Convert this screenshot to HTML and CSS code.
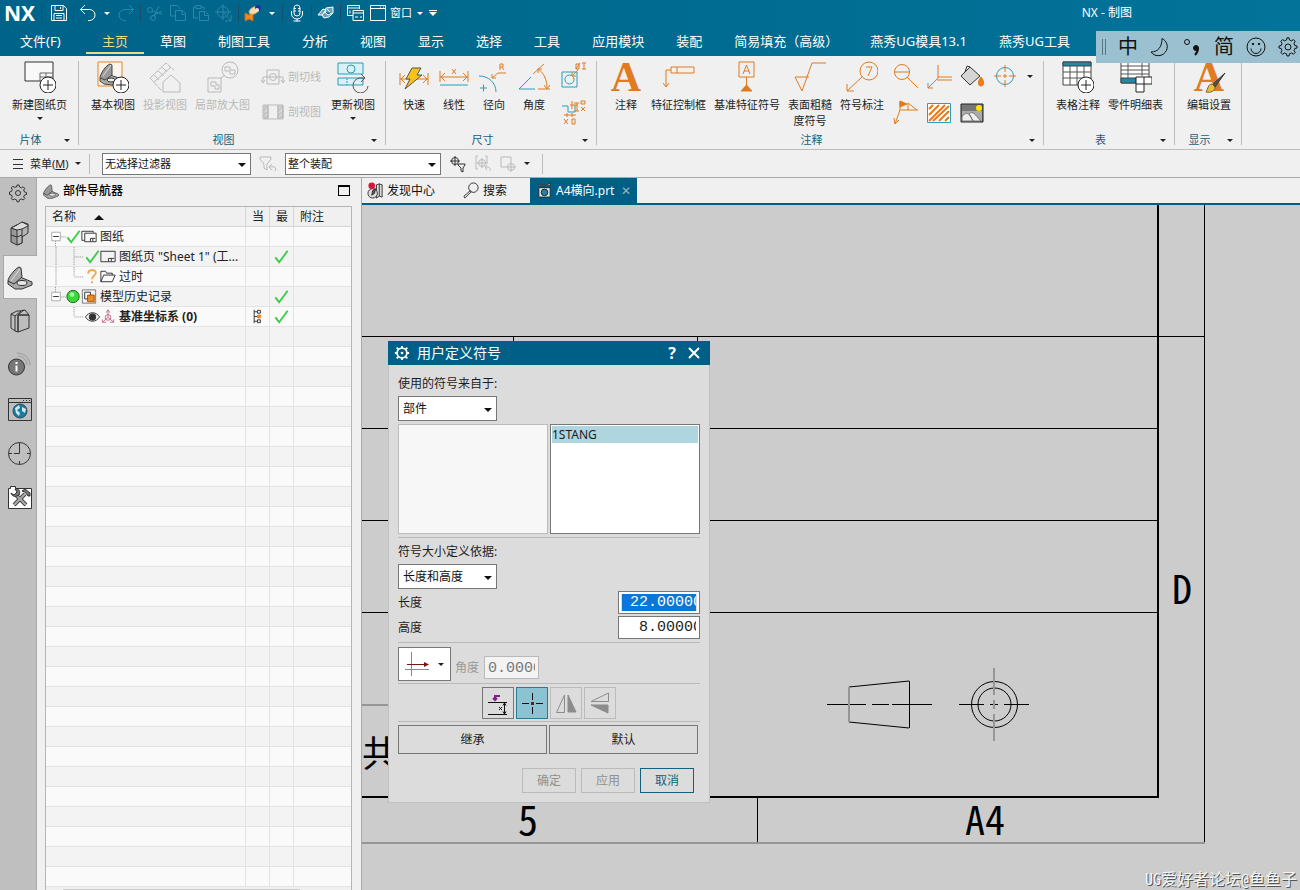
FILE: index.html
```html
<!DOCTYPE html>
<html lang="zh-CN">
<head>
<meta charset="utf-8">
<title>NX - 制图</title>
<link rel="stylesheet" href="styles.css">
</head>
<body>
<header class="titlebar">
  <span class="logo">NX</span><i class="tsep logo-sep"></i>
  <button class="tbtn" aria-label="保存"><svg viewBox="0 0 18 18"><path d="M1.500 1.500h12l3 3v12h-15zM5 1.500v5h8v-5M10.500 3v2M4 16.500v-7h10v7M6 11.500h6M6 14h6"/></svg></button>
  <i class="tsep"></i>
  <button class="tbtn" aria-label="撤销"><svg viewBox="0 0 18 18"><path d="M6 1L1.500 5.500 6 10M2 5.500h8.500a5.500 5.500 0 0 1 0 11H9"/></svg></button>
  <button class="tcaret" aria-label="撤销列表"></button>
  <button class="tbtn dim" disabled aria-label="重做"><svg viewBox="0 0 18 18"><path d="M12 1l4.500 4.500L12 10M16 5.500H7.500a5.500 5.500 0 0 0 0 11H9"/></svg></button>
  <i class="tsep"></i>
  <button class="tbtn dim" disabled aria-label="剪切"><svg viewBox="0 0 18 18"><circle cx="4" cy="6" r="2.500"/><circle cx="7" cy="14" r="2.500"/><path d="M6 7l10 3M8 12l5-10M6 12l10-5"/></svg></button>
  <button class="tbtn dim" disabled aria-label="复制"><svg viewBox="0 0 18 18"><path d="M6 12H1.500v-10.500h7l2 2V5M6.500 6.500h7l3 3v7h-10zM13 6.500v4h3"/></svg></button>
  <button class="tbtn dim" disabled aria-label="粘贴"><svg viewBox="0 0 18 18"><path d="M6 14H1.500V3H4M4 1.500h5v3H4zM9 3h3v3M7.500 7.500h6l3 3v6h-9zM12.500 8v3.500h4"/></svg></button>
  <button class="tbtn dim" disabled aria-label="删除"><svg viewBox="0 0 18 18"><circle cx="8" cy="8" r="5.500"/><path d="M8 0v16M0 8h16M9 9l7 8M16 11v6h-6"/></svg></button>
  <i class="tsep"></i>
  <button class="tbtn" aria-label="特征"><svg viewBox="0 0 18 18"><path d="M1 9l4 2 4-2v8l-4-2-4 2z" fill="#f28b1f" stroke="#c96a10"/><path d="M5 8c1-4 5-6 9-5l1 2c-1 4-5 6-9 5z" fill="#f3d9b0" stroke="#d7a764"/><circle cx="14" cy="4" r="3" fill="#2030a0" stroke="none"/><circle cx="13" cy="6" r="2" fill="#f4e4cc" stroke="none"/></svg></button>
  <button class="tcaret" aria-label="特征列表"></button>
  <i class="tsep"></i>
  <button class="tbtn" aria-label="语音"><svg viewBox="0 0 18 18"><rect x="6" y="1" width="6" height="11" rx="3"/><path d="M3.500 7v3a5.500 5 0 0 0 11 0V7M9 15v2.500M5.500 17h7M6 4.500h2M10 4.500h2M6 7h2M10 7h2"/></svg></button>
  <i class="tsep"></i>
  <button class="tbtn" aria-label="触控"><svg viewBox="0 0 18 18"><path d="M1 11l5-6 3 1-4 5zM9 4l7-1v6l-4 4-5 1-2-3 3-3zM8 8l3 3 4-2M10 5l3 3" fill="#cfe6ef" fill-opacity=".5"/></svg></button>
  <i class="tsep"></i>
  <button class="tbtn" aria-label="切换窗口"><svg viewBox="0 0 18 18"><path d="M7 11.500H1.500v-10h12V5M1.500 4h12M7 6.500h10.500v10H7zM7 9h10M9 13h3M14 13h2M4 6.500v3"/></svg></button>
  <button class="tbtn wide" aria-label="窗口"><svg viewBox="0 0 18 18"><path d="M1.500 1.500h15v15h-15zM1.500 4.500h15M11 3h1M14 3h1"/></svg><span>窗口</span></button>
  <button class="tcaret last" aria-label="窗口列表"></button>
  <button class="tcaret over" aria-label="自定义"></button>
  <span class="apptitle">NX - 制图</span>
</header>

<nav class="tabs">
  <button class="file">文件(F)</button><button class="on">主页</button><button>草图</button><button>制图工具</button><button>分析</button><button>视图</button><button>显示</button><button>选择</button><button>工具</button><button>应用模块</button><button>装配</button><button>简易填充（高级）</button><button>燕秀UG模具13.1</button><button>燕秀UG工具</button>
</nav>

<div class="ime">
  <i class="grip"></i><span>中</span>
  <svg viewBox="0 0 20 20"><path d="M12 1.500a9 9 0 1 1-11 13.500c7 0 11-5 11-13.500z"/></svg>
  <svg viewBox="0 0 20 20"><circle cx="5" cy="5" r="2.500"/><circle cx="14" cy="11" r="2.500" fill="#111"/><path d="M16 11c0 4-1 5-3 7" stroke-width="2"/></svg>
  <span>简</span>
  <svg viewBox="0 0 20 20"><circle cx="10" cy="10" r="9"/><path d="M5 11.500a5 5 0 0 0 10 0"/><circle cx="7" cy="7" r=".8" fill="#111"/><circle cx="13" cy="7" r=".8" fill="#111"/></svg>
  <svg viewBox="0 0 20 20"><circle cx="10" cy="10" r="3"/><path d="M8.500 3L9 .8h2l.5 2.200 2 .8 2-1.200 1.700 1.700-1.200 2 .8 2.200 2.200.5v2l-2.200.5-.8 2 1.200 2-1.700 1.700-2-1.200-2 .8-.5 2.200H9l-.5-2.200-2-.8-2 1.200-1.700-1.700 1.200-2-.8-2L1 11V9l2.200-.5.8-2.200-1.200-2 1.700-1.700 2 1.200z"/></svg>
</div>

<section class="ribbon">
  <div class="group g-sheet">
    <div class="items">
      <button class="item"><svg viewBox="0 0 32 32"><path d="M1 1h28v19H1z" fill="#f8f8f8" stroke="#333"/><path d="M16 12h13M16 12v8M22 12v8M16 16h13" stroke="#666"/><circle cx="24" cy="24" r="8" fill="#fff" stroke="#222"/><path d="M24 19v10M19 24h10" stroke="#222"/></svg><span>新建图纸页</span><i class="caret"></i></button>
    </div>
    <div class="gfoot"><span>片体</span><button class="launch" aria-label="片体选项"></button></div>
  </div>
  <div class="group g-view">
    <div class="items">
      <button class="item"><svg viewBox="0 0 32 32"><path d="M1 1h24v24H1z" fill="#fbf5ee" stroke="#e0862e"/><path d="M3 17l10-3 9 3v4l-7 3-8-1-4-3z" fill="#aaa" stroke="#444"/><path d="M3 17c0-4 6-13 10-14l2 1v10l-7 5z" fill="#999" stroke="#444"/><path d="M6 15l8-11" stroke="#ddd"/><ellipse cx="14" cy="19" rx="4" ry="2" fill="#eee" stroke="#333"/><circle cx="24" cy="24" r="8" fill="#fff" stroke="#222"/><path d="M24 19v10M19 24h10" stroke="#222"/></svg><span>基本视图</span></button>
      <button class="item" disabled><svg viewBox="0 0 32 32"><path d="M1 17L17 2l8 7M1 17l12 13" stroke-dasharray="5 1"/><path d="M5 14l5 5M9 10l6 5M13 6l5 5M5 21L22 6"/><path d="M14 21l8-7 9 8v9H14z"/></svg><span>投影视图</span></button>
      <button class="item" disabled><svg viewBox="0 0 32 32"><circle cx="23" cy="9" r="8"/><path d="M18 6h5v3h5v4h-5v-3h-5zM1 17h13v14H1zM4 21h5v3h3v4H8v-3H4zM13 18l5-4"/></svg><span>局部放大图</span></button>
      <div class="stack">
        <button class="srow" disabled><svg viewBox="0 0 24 18"><path d="M6 2h12v14H6zM2 9h20M2 9v5M22 9v5M0 12l2 3 2-3M20 12l2 3 2-3"/><circle cx="12" cy="9" r="3.500"/></svg><span>剖切线</span></button>
        <button class="srow" disabled><svg viewBox="0 0 24 18"><path d="M2 2h20v14H2zM7 2v14M17 2v14M2 8l5-5M2 13l5-5M3 16l4-4M17 8l5-5M17 13l5-5M18 16l4-4"/><path d="M3 3h4v12H3zM17 3h5v12h-5z" fill="#bbb" fill-opacity=".5"/></svg><span>剖视图</span></button>
      </div>
      <button class="item"><svg viewBox="0 0 32 32"><g stroke="#2b9dbb"><path d="M1 2h25v11H1zM1 17h25v7H1z" fill="#d9f2f8"/><circle cx="14" cy="8" r="4"/><path d="M10 17v7" stroke-dasharray="2 1"/></g><path d="M31 25a7.500 7.500 0 1 1-8-8h5M24 13l4 4-4 4" stroke="#555"/></svg><span>更新视图</span><i class="caret"></i></button>
    </div>
    <div class="gfoot"><span>视图</span><button class="launch" aria-label="视图选项"></button></div>
  </div>
  <div class="group g-dim">
    <div class="items">
      <button class="item"><svg viewBox="0 0 32 32"><path d="M2 12v12M30 12v12M2 18h28M7 14l-4 4 4 4M25 14l4 4-4 4" stroke="#e07b1f"/><path d="M14 7h9l-4 7h5L7 28l5-10H8z" fill="#f9c21b" stroke="#555"/></svg><span>快速</span></button>
      <button class="item"><svg viewBox="0 0 32 32"><path d="M2 10v11M30 10v11M2 16h28M7 12l-4 4 4 4M25 12l4 4-4 4M14 8l4 5M18 8l-4 5" stroke="#e07b1f"/><path d="M2 24h28" stroke="#2b9dbb"/></svg><span>线性</span></button>
      <button class="item"><svg viewBox="0 0 32 32"><path d="M1 15c10 0 17 7 17 16M2 27h7M5.500 23.500v7" stroke="#2b9dbb"/><path d="M28 12h-8l-6 5M14 13v4h4M22 9V3h3v3h-3M24 6l2 3" stroke="#e07b1f"/></svg><span>径向</span></button>
      <button class="item"><svg viewBox="0 0 32 32"><path d="M1 28L13 16M1 28h16" stroke="#2b9dbb"/><path d="M15 13L26 3M20 28h12M20 8c6 4 9 11 9 19M20 12V8h4M26 24l3 4 3-4" stroke="#e07b1f"/></svg><span>角度</span></button>
      <div class="pair">
        <button aria-label="孔标注"><svg viewBox="0 0 28 28"><path d="M2 11h15v15H2z" stroke="#2b9dbb"/><circle cx="9.500" cy="18.500" r="4.500" stroke="#2b9dbb"/><path d="M12 15l6-6M12 11v4h4M16 8V3h3v5zM16 8l4-6M22 2h4M24 2v6M22 8h4" stroke="#e07b1f"/></svg></button>
        <button aria-label="坐标尺寸"><svg viewBox="0 0 28 28"><path d="M2 9h6v6h7V8" stroke="#2b9dbb"/><path d="M12 4v8M10 8h8M4 18h12M7 16v4M12 16v4M4 22l4 5M8 22l-4 5M12 22h3v5h-3zM14 6h5M14 14h5M17 6v8M21 10l4 4M25 10l-4 4M21 4h4v3h-4z" stroke="#e07b1f"/></svg></button>
      </div>
    </div>
    <div class="gfoot"><span>尺寸</span><button class="launch" aria-label="尺寸选项"></button></div>
  </div>
  <div class="group g-note">
    <div class="items">
      <button class="item note"><span class="bigA">A</span><span>注释</span></button>
      <button class="item"><svg viewBox="0 0 32 32" class="or"><path d="M8 6h23v6H8zM14 6v6M8 9H3v17M0 22l3 4 3-4"/></svg><span>特征控制框</span></button>
      <button class="item"><svg viewBox="0 0 32 32" class="or"><path d="M8 1h15v15H8zM15.500 16v11M12 13l3.500-9 3.500 9M13 10h5"/><path d="M10 30l5.500-6 5.500 6z" fill="#e07b1f"/></svg><span>基准特征符号</span></button>
      <button class="item two"><svg viewBox="0 0 32 32" class="or"><path d="M1 16h14M1 16l7 14L18 2h14"/></svg><span>表面粗糙度符号</span></button>
      <button class="item"><svg viewBox="0 0 32 32" class="or"><circle cx="23" cy="10" r="9"/><path d="M16 16L1 30M1 23v7h7"/><path d="M20 6h6l-4 9"/></svg><span>符号标注</span></button>
      <div class="grid">
        <button aria-label="目标点"><svg viewBox="0 0 28 28" class="or"><circle cx="10" cy="10" r="7.500"/><path d="M2 10h16M15 15l11 11"/></svg></button>
        <button aria-label="相交符号"><svg viewBox="0 0 28 28" class="or"><path d="M13 3v13L3 26M3 21v5h5M13 15h14M12 18h15"/></svg></button>
        <button aria-label="区域填充"><svg viewBox="0 0 28 28"><path d="M12 5l10 9-10 9-9-9z" fill="#d5d5d5" stroke="#333"/><path d="M12 5L9 4 7 10" stroke="#333"/><path d="M23 15c4 5 3 9 0 9s-4-4 0-9z" fill="#ef7d1a" stroke="#e07b1f"/></svg></button>
        <button aria-label="中心标记"><svg viewBox="0 0 28 28"><circle cx="14" cy="14" r="8.500" stroke="#2b9dbb"/><path d="M14 3v7M14 18v7M3 14h7M18 14h7M12 14h4M14 12v4" stroke="#e07b1f"/></svg></button>
        <button class="launch more" aria-label="中心线列表"></button>
        <button aria-label="焊接符号"><svg viewBox="0 0 28 28" class="or"><path d="M8 2v9M8 11h18M8 11L3 25M2 19l1 6 4-4M16 11V4l9 7"/><path d="M8 2l7 3-7 3z" fill="#e07b1f"/></svg></button>
        <button aria-label="剖面线"><svg viewBox="0 0 28 28"><path d="M2.500 4.500h23v19h-23z" fill="#fff" stroke="#2b9dbb"/><path d="M4 10l4-4M4 16L14 6M4 22L20 6M8 22L24 7M14 22l10-10M20 22l4-4" stroke="#e07b1f" stroke-width="2"/></svg></button>
        <button aria-label="图像"><svg viewBox="0 0 28 28"><path d="M3 5h22v18H3z" fill="#777" stroke="#222"/><path d="M4 12h20v10H4z" fill="#aaa" stroke="none"/><circle cx="21" cy="9" r="3" fill="#ffe600" stroke="none"/><path d="M4 22v-4c1-3 5-5 8-2l3 6zM11 15c4-4 6 1 12 7h-8z" fill="#eee" stroke="#777"/></svg></button>
      </div>
    </div>
    <div class="gfoot"><span>注释</span><button class="launch" aria-label="注释选项"></button></div>
  </div>
  <div class="group g-table">
    <div class="items">
      <button class="item"><svg viewBox="0 0 32 32"><path d="M1 1h28v23H1z" fill="#fff" stroke="#444"/><path d="M1 1h28v4H1z" fill="#2587a8" stroke="#444"/><path d="M8 5v19M15 5v19M22 5v19M1 11h28M1 17h28" stroke="#555"/><circle cx="24" cy="24" r="8" fill="#fff" stroke="#222"/><path d="M24 19v10M19 24h10" stroke="#222"/></svg><span>表格注释</span></button>
      <button class="item"><svg viewBox="0 0 32 32"><path d="M1 1h28v21H1z" fill="#fff" stroke="#444"/><path d="M1 17h15v5H1z" fill="#2587a8" stroke="#444"/><path d="M8 1v16M22 1v14M1 5h28M1 9h28M1 13h28" stroke="#555"/><path d="M16 16h16v7h-8v8h-8z" fill="#fff" stroke="#222"/><path d="M24 16v7h-8" stroke="#222"/></svg><span>零件明细表</span></button>
    </div>
    <div class="gfoot"><span>表</span><button class="launch" aria-label="表选项"></button></div>
  </div>
  <div class="group g-show">
    <div class="items">
      <button class="item edit"><span class="bigA">A</span><svg class="brush" viewBox="0 0 22 22"><path d="M20 1L7 13l3 2z" fill="#555" stroke="#333"/><path d="M7 12c-4 0-4 5-6 8 5 1 9-1 9-5z" fill="#e9bf3b" stroke="#7d6320"/></svg><span>编辑设置</span></button>
    </div>
    <div class="gfoot"><span>显示</span><button class="launch" aria-label="显示选项"></button></div>
  </div>
</section>

<div class="toolbar">
  <button class="menu"><svg viewBox="0 0 12 12"><path d="M1 1.500h10M1 6.500h10M1 10.500h10"/></svg><span>菜单(<u>M</u>)</span><i class="caret"></i></button>
  <i class="vsep"></i>
  <label class="pick pick-a"><select aria-label="选择过滤器"><option>无选择过滤器</option></select></label>
  <button class="tool" disabled aria-label="重置过滤器"><svg viewBox="0 0 18 18"><path d="M1 2h11v2L8 9v6l-3-2V9L1 4zM16 16c2-3 0-5-5-4M13 9l-3 3 3 3"/></svg></button>
  <label class="pick pick-b"><select aria-label="选择范围"><option>整个装配</option></select></label>
  <button class="tool" aria-label="点过滤"><svg viewBox="0 0 18 18"><circle cx="6" cy="6" r="3.500"/><path d="M6 1v10M1 6h10M9 9h7v1l-2 3v4l-2-1v-3l-3-3z"/></svg></button>
  <button class="tool" disabled aria-label="捕捉"><svg viewBox="0 0 18 18"><circle cx="8" cy="8" r="3.500"/><path d="M4 1H2v13h2M11 1h2v8M8 3v10M3 8h10M16 16c1-2 0-4-4-4M13 10l-2 2 2 3"/></svg></button>
  <button class="tool" disabled aria-label="框选"><svg viewBox="0 0 18 18"><path d="M7 12H2V2h10v5"/><circle cx="12" cy="12" r="3.500"/><path d="M12 7v10M7 12h10"/></svg></button>
  <button class="launch" aria-label="更多选择"></button>
  <i class="vsep"></i>
</div>

<main class="work">
  <aside class="rail">
    <button class="short" aria-label="设置"><svg viewBox="0 0 20 20"><circle cx="10" cy="10" r="2.500"/><path d="M8.500 4L9 2h2l.5 2 2 .8 1.700-1 1.500 1.500-1 1.700.8 2 2 .5v2l-2 .5-.8 1.800 1 1.700-1.500 1.500-1.700-1-2 .8-.5 2H9l-.5-2-2-.8-1.700 1-1.500-1.500 1-1.700-.8-1.800-2-.5V9l2-.5.8-2-1-1.700 1.500-1.500 1.700 1z"/></svg></button>
    <button aria-label="装配导航器"><svg viewBox="0 0 26 26"><path d="M4 8l6-3 5 2v16l-5 2-6-3z" fill="#999"/><path d="M4 8l6-3 5 2 6-2v8l-6 4v6l-5 2V10z" fill="#b5b5b5"/><path d="M10 5l5-3 6 2v2l-6 3-5 1-6-2z" fill="#ddd"/><path d="M4 15l6 2 5-2M15 9v8M15 2l6 3"/></svg></button>
    <button class="on" aria-label="部件导航器"><svg viewBox="0 0 26 26"><path d="M1 17l12-4 12 5v3l-10 4H8l-7-5z" fill="#aaa"/><path d="M1 17c0-4 8-13 11-14l2 1 1 9-8 7z" fill="#a8a8a8"/><path d="M4 17l9-12" stroke="#ddd"/><ellipse cx="15" cy="19" rx="5" ry="2.500" fill="#e8e8e8"/></svg></button>
    <button aria-label="重用库"><svg viewBox="0 0 26 26"><path d="M11 7h11v13l-11 4z" fill="#bdbdbd"/><path d="M4 6l6-3h3l5-1 4 5H11v17l-3-1-4-3zM8 8v15M4 6l4 2 6-5M11 7l6-5"/></svg></button>
    <button aria-label="信息"><svg viewBox="0 0 26 26"><circle cx="9.500" cy="15" r="8" fill="#777"/><path d="M9.500 10v2M9.500 13.500v6" stroke="#fff" stroke-width="2"/><path d="M11 4c5 0 9 4 9 9M10 1c8 0 13 6 13 12" stroke="#999"/></svg></button>
    <button aria-label="浏览器"><svg viewBox="0 0 26 26"><path d="M1.500 2.500h23v22h-23zM2 6.500h22"/><path d="M16 4.500h1M19 4.500h1M22 4.500h1"/><circle cx="13" cy="15" r="7" fill="#1c7ca0" stroke="#345"/><path d="M8 12l4-3 1 3-3 2 3 3-1 3-3-3zM15 11l4 2-1 4-3-2z" fill="#cfe8ef" stroke="none"/></svg></button>
    <button aria-label="历史记录"><svg viewBox="0 0 26 26"><circle cx="12.500" cy="13.500" r="11"/><path d="M12.500 6v7.500H7M12.500 3v3M12.500 21v3M2 13.500h3M20 13.500h3"/></svg></button>
    <button aria-label="工具"><svg viewBox="0 0 26 26"><path d="M1.500 4.500h2v-2h5v2h16v20h-23z" fill="#fff"/><path d="M7 21L18 10M8 10l11 11" stroke="#444" stroke-width="4"/><path d="M7 21L18 10M8 10l11 11" stroke="#aaa" stroke-width="2"/><path d="M4 9l3 2 3-3-2-3c4-1 6 3 4 6-3 2-7 2-8-2zM15 7l3-2 5 4v3h-2l-3-4z" fill="#777"/></svg></button>
  </aside>

  <section class="panel">
    <h1><svg viewBox="0 0 26 26"><path d="M1 17l12-4 12 5v3l-10 4H8l-7-5z" fill="#aaa"/><path d="M1 17c0-4 8-13 11-14l2 1 1 9-8 7z" fill="#999"/><ellipse cx="15" cy="19" rx="5" ry="2.500" fill="#e8e8e8"/></svg><span>部件导航器</span><button class="dock" aria-label="最大化"></button></h1>
    <div class="treebox">
    <table class="tree">
      <colgroup><col><col class="c24"><col class="c24"><col class="c57"></colgroup>
      <thead><tr><th>名称<i class="sort"></i></th><th>当</th><th>最</th><th>附注</th></tr></thead>
      <tbody>
        <tr><td><div class="node"><svg class="w20" viewBox="0 0 20 20"><path class="box" d="M5.500 5.500h9v9h-9z"/><path class="sign" d="M7 10h6"/><path class="dots" d="M15 10.500h5M9.500 15v5"/></svg><svg class="w15 ok" viewBox="0 0 15 20"><path d="M1 11l4 5L14 4"/></svg><svg class="w16" viewBox="0 0 16 20"><path d="M3 14H.5V4.500h12V6M3.500 6.500h12v9h-12zM9.500 12h5M9.500 12v3M12 12v3"/></svg><span>图纸</span></div></td><td></td><td></td><td></td></tr>
        <tr><td><div class="node"><svg class="w39" viewBox="0 0 39 20"><path class="dots" d="M9.500 0v20M28.500 0v20M29 10.500h9"/></svg><svg class="w15 ok" viewBox="0 0 15 20"><path d="M1 11l4 5L14 4"/></svg><svg class="w16" viewBox="0 0 16 20"><path d="M.5 4.500h15v11H.5zM8.500 12h6M8.500 12v3M11.500 12v3"/></svg><span>图纸页 "Sheet 1" (工...</span></div></td><td></td><td><svg class="w15 ok" viewBox="0 0 15 20"><path d="M1 11l4 5L14 4"/></svg></td><td></td></tr>
        <tr><td><div class="node"><svg class="w39" viewBox="0 0 39 20"><path class="dots" d="M9.500 0v20M28.500 0v10M29 10.500h9"/></svg><svg class="w15 ask" viewBox="0 0 15 20"><path d="M3 7c0-5 8-5 8-1 0 3-4 3-4 7M7 15v2"/></svg><svg class="w16" viewBox="0 0 16 20"><path d="M.5 15.500v-11h5l1 2h6v2M.5 15.500l3-7h12l-3 7z"/></svg><span>过时</span></div></td><td></td><td></td><td></td></tr>
        <tr><td><div class="node"><svg class="w20" viewBox="0 0 20 20"><path class="box" d="M5.500 5.500h9v9h-9z"/><path class="sign" d="M7 10h6"/><path class="dots" d="M15 10.500h5M9.500 0v5"/></svg><svg class="w15" viewBox="0 0 15 20"><circle cx="7" cy="10" r="6.500" fill="#38d838" stroke="#286428"/><circle cx="6" cy="8" r="2.500" fill="#a5f5a5" stroke="none"/></svg><svg class="w16" viewBox="0 0 16 20"><path d="M1 6V3h3M12 3h3v3M15 14v3h-3M4 17H1v-3M4 3h8M1 6v8M15 6v8M4 17h8" stroke="#777"/><path d="M3.500 5.500h6v7h-6z" fill="#fff"/><path d="M6.500 8.500h7v7h-7z" fill="#f08a1c" stroke="#a35107"/></svg><span>模型历史记录</span></div></td><td></td><td><svg class="w15 ok" viewBox="0 0 15 20"><path d="M1 11l4 5L14 4"/></svg></td><td></td></tr>
        <tr><td><div class="node bold"><svg class="w39" viewBox="0 0 39 20"><path class="dots" d="M28.500 0v10M29 10.500h9"/></svg><svg class="w15" viewBox="0 0 15 20"><path d="M0 10.500c4-6 11-6 15 0-4 6-11 6-15 0z"/><circle cx="7.500" cy="10.500" r="3.500" fill="#333"/></svg><svg class="w16" viewBox="0 0 16 20"><path d="M8 11V3M8 11l-6 5M8 11l6 5M6 6l2-3 2 3M2 13v3h4M14 13v3h-4M5 11a3 3 0 1 1 6 0 3 3 0 0 1-6 0" stroke="#c56a8c"/></svg><span>基准坐标系 (0)</span></div></td><td><svg class="w15" viewBox="0 0 15 20"><path d="M4 3v14M4 5h3M4 10h3M4 15h3M7.500 3.500h3v3h-3zM7.500 13.500h3v3h-3z"/><path d="M7.500 8.500h3v3h-3z" fill="#e88420" stroke="#e88420"/></svg></td><td><svg class="w15 ok" viewBox="0 0 15 20"><path d="M1 11l4 5L14 4"/></svg></td><td></td></tr>
        <tr><td></td><td></td><td></td><td></td></tr><tr><td></td><td></td><td></td><td></td></tr><tr><td></td><td></td><td></td><td></td></tr><tr><td></td><td></td><td></td><td></td></tr>
        <tr><td></td><td></td><td></td><td></td></tr><tr><td></td><td></td><td></td><td></td></tr><tr><td></td><td></td><td></td><td></td></tr><tr><td></td><td></td><td></td><td></td></tr>
        <tr><td></td><td></td><td></td><td></td></tr><tr><td></td><td></td><td></td><td></td></tr><tr><td></td><td></td><td></td><td></td></tr><tr><td></td><td></td><td></td><td></td></tr>
        <tr><td></td><td></td><td></td><td></td></tr><tr><td></td><td></td><td></td><td></td></tr><tr><td></td><td></td><td></td><td></td></tr><tr><td></td><td></td><td></td><td></td></tr>
        <tr><td></td><td></td><td></td><td></td></tr><tr><td></td><td></td><td></td><td></td></tr><tr><td></td><td></td><td></td><td></td></tr><tr><td></td><td></td><td></td><td></td></tr>
        <tr><td></td><td></td><td></td><td></td></tr><tr><td></td><td></td><td></td><td></td></tr><tr><td></td><td></td><td></td><td></td></tr><tr><td></td><td></td><td></td><td></td></tr>
        <tr><td></td><td></td><td></td><td></td></tr><tr><td></td><td></td><td></td><td></td></tr><tr><td></td><td></td><td></td><td></td></tr><tr><td></td><td></td><td></td><td></td></tr>
      </tbody>
    </table>
    <div class="hscroll"></div>
    </div>
  </section>

  <section class="docs">
    <div class="doctabs">
      <button><svg viewBox="0 0 18 18"><path d="M10 3l3-1 3 1v13l-3-1-3 2zM13 2v13" fill="#ddd"/><circle cx="6" cy="12" r="5" fill="#ddd"/><path d="M5 14l1-5 3-2-1 5z" fill="#555"/><circle cx="5" cy="4" r="3.500" fill="#d8143c" stroke="none"/></svg>发现中心</button>
      <button><svg viewBox="0 0 18 18"><circle cx="11" cy="6" r="5"/><path d="M8 9l-7 6 1 2 7-7"/></svg>搜索</button>
      <button class="on"><svg viewBox="0 0 18 18"><path d="M2 3h10l3-2v3H4M3 6h12v10H3z" fill="#d8e6ea" stroke="#1c2c33"/><circle cx="9" cy="11" r="3.500" fill="#2b7f9d" stroke="#222"/></svg>A4横向.prt<span class="x">✕</span></button>
    </div>
    <div class="canvas">
      <svg class="drawing" width="938" height="685" viewBox="362 205 938 685">
        <g class="thin">
          <path d="M362 336.500h842M362 428.500h795M362 520.500h795M362 612.500h795M1204.500 205v638M757.500 798v45M513.500 337v5M697.500 337v5"/>
          <path d="M909.500 681v47M827 704.500h39M872 704.500h17M892 704.500h40M849 687l60-6M849 722l60 6M959 704.500h25M990 704.500h8M1004 704.500h25"/>
          <circle cx="994.500" cy="704.500" r="23"/><circle cx="994.500" cy="704.500" r="16.500"/>
        </g>
        <path class="grey" d="M362 843h843M362 705h30M849 687v35M994 668v27M994 700v9M994 714v27"/>
        <path class="thick" d="M1158 205v592M362 797h797"/>
        <text x="518" y="835" class="cad">5</text>
        <text x="965" y="835" class="cad">A4</text>
        <text x="1172" y="604" class="cad">D</text>
        <text x="362" y="767" class="cad cjk">共</text>
      </svg>
      <p class="mark">UG爱好者论坛@鱼鱼子</p>

      <form class="dialog" aria-label="用户定义符号">
        <header><svg viewBox="0 0 18 18"><circle cx="9" cy="9" r="5.500" stroke-width="2"/><circle cx="9" cy="9" r="1.500" fill="#fff" stroke="none"/><path d="M9 1v3M9 14v3M1 9h3M14 9h3M3 3l2 2M13 13l2 2M3 15l2-2M13 5l2-2" stroke-width="2"/></svg><span>用户定义符号</span><button type="button" class="q" aria-label="帮助">?</button><button type="button" aria-label="关闭"><svg viewBox="0 0 14 14"><path d="M2 2l10 10M12 2L2 12" stroke-width="2"/></svg></button></header>
        <div class="body">
          <label class="cap" for="src">使用的符号来自于:</label>
          <span class="pick pick-d"><select id="src"><option>部件</option></select></span>
          <div class="lists"><div class="list off"></div><ul class="list"><li>1STANG</li></ul></div>
          <hr>
          <label class="cap" for="basis">符号大小定义依据:</label>
          <span class="pick pick-d"><select id="basis"><option>长度和高度</option></select></span>
          <div class="field"><label for="len">长度</label><input id="len" class="sel" value="22.00000"></div>
          <div class="field"><label for="hei">高度</label><input id="hei" class="num" value="8.00000"></div>
          <hr>
          <div class="angle">
            <button type="button" class="orient" aria-label="方向"><svg viewBox="0 0 26 26"><path d="M7.500 1v24M1 18.500h24" stroke="#888"/><path d="M3 13.500h19" stroke="#7b1414"/><path d="M20 11l5 2.500-5 2.500z" fill="#7b1414" stroke="none"/></svg><i class="caret"></i></button>
            <label for="ang">角度</label><input id="ang" value="0.00000" disabled>
          </div>
          <hr class="tight">
          <div class="modes">
            <button type="button" aria-label="偏移"><svg viewBox="0 0 26 26"><path d="M3 12.500h19M3 24.500h19M19.500 13v11M18 15.500l1.500-2.500 1.500 2.500M18 21.500l1.500 2.500 1.500-2.500M14 17l3 3M17 17l-3 3" stroke="#111"/><path d="M15 6h-5v4M8 8l2 2 2-2" stroke="#82208a" stroke-width="2"/></svg></button>
            <button type="button" class="on" aria-label="放置"><svg viewBox="0 0 26 26"><path d="M13.500 3v7M13.500 17v7M3 13.500h7M17 13.500h7" stroke="#111"/><path d="M12 12h3v3h-3z" fill="#7b1414" stroke="none"/></svg></button>
            <button type="button" disabled aria-label="水平镜像"><svg viewBox="0 0 26 26"><path d="M11.500 5v17.500h-8z"/><path d="M15 5v17h8z" fill="#8c8c8c"/></svg></button>
            <button type="button" disabled aria-label="竖直镜像"><svg viewBox="0 0 26 26"><path d="M21.500 3v8.500H4z"/><path d="M21 23v-8H4z" fill="#8c8c8c"/></svg></button>
          </div>
          <hr class="tight">
          <div class="two-btn"><button type="button">继承</button><button type="button">默认</button></div>
          <div class="actions"><button type="button" disabled>确定</button><button type="button" disabled>应用</button><button type="button" class="primary">取消</button></div>
        </div>
      </form>
    </div>
  </section>
</main>
</body>
</html>
```

FILE: styles.css
```css
* { box-sizing: border-box; }
body { margin: 0; height: 100vh; display: flex; flex-direction: column; overflow: hidden; position: relative; background: #f0f0f0; color: #1c1c1c; font: 12px/16px "Noto Sans", "Noto Sans CJK SC", sans-serif; }
button { font: inherit; color: inherit; background: none; border: 0; padding: 0; margin: 0; }
svg { fill: none; stroke: #333; display: block; flex: none; }
i { display: block; }
span { white-space: nowrap; }

.titlebar { height: 26px; flex: none; display: flex; align-items: center; gap: 5px; padding-left: 4px; background: linear-gradient(90deg, #006389, #006b90 50%, #03739a); color: #fff; }
.logo { width: 32px; font: bold 21px/24px "Noto Sans", sans-serif; }
.tsep { width: 1px; height: 18px; background: #17506d; }
.logo-sep { margin-right: 3px; }
.tbtn svg { width: 18px; height: 18px; stroke: #fff; }
.tbtn.dim svg { stroke: #2c88aa; }
.wide { display: flex; align-items: center; gap: 3px; font-size: 11px; }
.tcaret { width: 10px; height: 18px; display: flex; align-items: center; justify-content: center; }
.tcaret::after { content: ""; border: 3px solid transparent; border-top-color: #fff; border-bottom: 0; }
.last { margin: 0 -2px; }
.over::after { width: 8px; height: 6px; border: 0; background: #fff; clip-path: polygon(0 0, 100% 0, 100% 16%, 0 16%, 0 34%, 100% 34%, 50% 100%, 0 34%); }
.apptitle { margin-left: auto; margin-right: 168px; }

.tabs { height: 30px; flex: none; display: flex; background: linear-gradient(90deg, #006389, #006b90 50%, #03739a); color: #fff; font-size: 13px; line-height: 24px; }
.tabs button { padding: 3px 16px 0; white-space: nowrap; border-bottom: 2px solid transparent; height: 28px; }
.tabs .file { padding-left: 20px; width: 86px; text-align: left; }
.tabs .on { color: #ecdc82; border-color: #ecdc82; }

.ime { position: absolute; right: 0; top: 31px; width: 204px; height: 32px; background: #9bc1d0; display: flex; align-items: center; gap: 12px; padding-left: 6px; z-index: 2; font-size: 20px; line-height: 30px; color: #111; }
.ime svg { width: 20px; height: 20px; stroke: #111; }
.grip { width: 4px; height: 16px; border: solid #587480; border-width: 0 1px; }

.ribbon { height: 94px; flex: none; display: flex; border-bottom: 1px solid #bdbdbd; font-size: 11px; line-height: 16px; }
.group { display: flex; flex-direction: column; position: relative; padding-top: 5px; }
.group::after { content: ""; position: absolute; right: 0; top: 5px; bottom: 4px; width: 1px; background: #bdbdbd; }
.g-sheet { width: 79px; }
.g-view { width: 307px; }
.g-dim { width: 211px; }
.g-note { width: 447px; }
.g-table { width: 131px; }
.g-show { width: 67px; }
.items { display: flex; flex: 1; gap: 8px; padding-left: 12px; align-items: flex-start; min-height: 0; }
.g-dim .items { gap: 0; padding-left: 8px; }
.item { display: flex; flex-direction: column; align-items: center; flex: none; position: relative; }
.item > svg { width: 32px; height: 32px; margin-bottom: 4px; }
.item > span { white-space: nowrap; }
.g-dim .item { width: 40px; }
.item.two > span { width: 44px; white-space: normal; }
.note { width: 34px; }
.items .bigA { height: 32px; margin-bottom: 4px; font: bold 42px/32px "Liberation Serif", serif; color: #e07b1f; }
.edit .brush { position: absolute; left: 18px; top: 11px; width: 22px; height: 22px; }
button:disabled { color: #b9b9b9; }
button:disabled svg { stroke: #b9b9b9; }
.or { stroke: #e07b1f; }
.caret, .launch { display: flex; align-items: center; justify-content: center; width: 12px; height: 10px; }
.caret::after, .launch::after { content: ""; border: 3px solid transparent; border-top-color: #222; border-bottom: 0; }
.stack { display: flex; flex-direction: column; gap: 19px; padding: 8px 0 0 3px; width: 65px; }
.srow { display: flex; gap: 3px; align-items: center; height: 16px; }
.srow svg { width: 24px; height: 18px; }
.pair { display: flex; flex-direction: column; width: 40px; align-items: center; gap: 8px; }
.pair svg, .grid svg { width: 28px; height: 28px; }
.grid { display: grid; grid-template-columns: repeat(4, 33px) 14px; row-gap: 8px; }
.grid .more { height: 30px; }
.gfoot { height: 18px; padding-bottom: 0; display: flex; align-items: center; justify-content: center; color: #12617f; position: relative; margin-right: 18px; }
.gfoot .launch { position: absolute; right: -12px; top: 4px; }

.toolbar { height: 28px; flex: none; display: flex; align-items: center; padding-left: 12px; border-bottom: 1px solid #a9a9a9; font-size: 11px; }
.menu { display: flex; align-items: center; gap: 6px; width: 77px; color: #222; }
.menu svg { width: 12px; height: 12px; }
.menu .caret { margin-left: -3px; }
.vsep { width: 1px; height: 20px; background: #bdbdbd; }
.pick { position: relative; display: block; }
.pick select { appearance: none; width: 100%; height: 100%; background: #fff; border: 1px solid #777; border-radius: 0; font: inherit; color: #111; padding: 0 2px; display: block; }
.pick::after { content: ""; position: absolute; right: 5px; top: 50%; border: 4px solid transparent; border-top-color: #111; border-bottom: 0; margin-top: -1px; }
.pick-a { width: 149px; height: 22px; margin-left: 12px; }
.pick-b { width: 156px; height: 22px; margin-right: 8px; }
.tool { width: 18px; margin-right: 7px; }
.tool svg { width: 18px; height: 18px; }
.pick-a + .tool { margin: 0 8px; }
.toolbar .launch { margin: 0 9px 0 -3px; }

.work { flex: 1; min-height: 0; display: flex; }
.rail { width: 37px; flex: none; background: #bfbfbf; border-right: 1px solid #a9a9a9; display: flex; flex-direction: column; }
.rail button { height: 44px; padding-left: 7px; display: flex; align-items: center; }
.rail .short { height: 33px; padding: 0 0 3px 8px; }
.rail .on { background: #f0f0f0; margin: 0 -1px 0 3px; padding-left: 3px; border: 1px solid #a9a9a9; border-right: 0; }
.rail svg { width: 26px; height: 26px; }
.rail .short svg { width: 20px; height: 20px; }

.panel { width: 325px; flex: none; padding: 0 9px 0 8px; display: flex; flex-direction: column; border-right: 1px solid #a9a9a9; }
.panel h1 { margin: 0; height: 28px; flex: none; display: flex; align-items: center; gap: 4px; font-size: 12px; font-weight: 500; color: #000; padding-bottom: 3px; }
.panel h1 svg { width: 16px; height: 16px; margin-left: -2px; }
.dock { margin-left: auto; margin-right: 2px; width: 12px; height: 11px; border: 1px solid #000; border-top-width: 2px; }
.treebox { flex: 1; min-height: 0; overflow: hidden; border: 1px solid #b5b5b5; border-bottom: 0; }
.tree { width: 100%; border-collapse: separate; border-spacing: 0; table-layout: fixed; color: #222; }
.c24 { width: 24px; }
.c57 { width: 57px; }
.tree th { height: 20px; padding: 0 6px; font-weight: 400; text-align: left; border: solid #d6d6d6; border-width: 0 1px 1px 0; background: #f0f0f0; white-space: nowrap; }
.tree td { height: 20px; padding: 0; border: solid #e3e3e3; border-width: 0 1px 1px 0; background: #fafafa; }
.tree tr:nth-child(even) td { background: #f3f3f3; }
.tree th:last-child, .tree td:last-child { border-right: 0; }
.tree td > svg { margin: 0 4px; }
.sort { display: inline-block; border: 5px solid transparent; border-bottom-color: #111; border-top: 0; margin-left: 18px; vertical-align: 1px; }
.node { display: flex; height: 19px; align-items: center; overflow: hidden; }
.node span { margin-left: 3px; line-height: 18px; }
.bold span { font-weight: 700; }
.tree svg { height: 19px; }
.w15 { width: 15px; }
.w16 { width: 16px; }
.w20 { width: 20px; }
.w39 { width: 39px; }
.ok { stroke: #3ccb4a; stroke-width: 2; }
.ask { stroke: #f0a850; stroke-width: 2; }
.box { fill: #fff; stroke: #aaa; }
.dots { stroke: #888; stroke-dasharray: 1 1; }
.hscroll { height: 3px; margin: 2px 51px 0 17px; background: #c9c9c9; }

.docs { flex: 1; min-width: 0; display: flex; flex-direction: column; }
.doctabs { height: 27px; flex: none; display: flex; border-bottom: 2px solid #005f87; color: #111; }
.doctabs button { display: flex; align-items: center; gap: 3px; padding: 0 23px 0 5px; white-space: nowrap; }
.doctabs svg { width: 17px; height: 17px; }
.doctabs .on { background: #005f87; color: #fff; padding: 0 6px; }
.doctabs .x { color: #9fb6c1; margin-left: 4px; }
.canvas { flex: 1; min-height: 0; position: relative; overflow: hidden; background: #ccc; }
.drawing { position: absolute; left: 0; top: 0; }
.thin { stroke: #000; }
.grey { stroke: #969696; stroke-width: 2; }
.thick { stroke: #000; stroke-width: 2; }
.cad { fill: #000; stroke: none; font: 40px "Liberation Sans Narrow", "Noto Sans Mono CJK SC", sans-serif; }
.cjk { font: 36px "Noto Sans CJK SC", sans-serif; }
.mark { position: absolute; right: 3px; bottom: 1px; margin: 0; font: 16px/22px "Noto Sans Mono CJK SC", "Noto Sans CJK SC", monospace; color: #f4f4f4; text-shadow: 1px 1px 0 #555; white-space: nowrap; }

.dialog { position: absolute; left: 26px; top: 136px; width: 322px; background: #dcdcdc; border: 1px solid #c0c0c0; border-top: 0; }
.dialog header { height: 24px; margin: 0 -1px; padding: 0 9px 0 6px; display: flex; align-items: center; background: #005f87; color: #fff; font-size: 14px; }
.dialog header svg { width: 16px; height: 16px; stroke: #fff; margin-right: 7px; }
.dialog header button svg { width: 14px; height: 14px; margin: 0; }
.q { margin: 0 11px 0 auto; font-weight: 700; font-size: 16px; }
.body { padding: 8px 9px 9px; display: flex; flex-direction: column; }
.cap { line-height: 22px; height: 23px; }
.pick-d { width: 99px; height: 25px; }
.pick-d select { padding-left: 4px; }
.lists { display: flex; gap: 2px; margin: 3px 0; }
.list { flex: 1; height: 110px; margin: 0; padding: 1px; list-style: none; background: #fff; border: 1px solid #777; }
.list.off { background: #f7f7f7; border-color: #bbb; }
.list li { background: #afd5df; line-height: 17px; }
.body hr { width: 100%; margin: 0 0 3px; border: 0; border-top: 1px solid #b9b9b9; }
.field { display: flex; justify-content: space-between; align-items: center; margin-top: 2px; }
.field input { width: 82px; height: 23px; border: 1px solid #777; padding: 2px 3px; font: 15px/17px "Liberation Mono", monospace; background: #fff; border-radius: 0; color: #222; }
.field .sel { color: #fff; text-indent: 8px; background: #0877d6 content-box; box-shadow: inset 0 0 0 2px #fff; }
.field .num { text-indent: 17px; }
.field + hr { margin: 3px 0 4px; }
.angle { display: flex; align-items: flex-end; gap: 5px; color: #999; }
.orient { width: 53px; height: 34px; border: 1px solid #777; background: #fff; display: flex; align-items: center; padding-left: 5px; gap: 5px; }
.orient svg { width: 26px; height: 26px; }
.angle label { line-height: 26px; margin-left: -1px; }
.angle input { width: 55px; height: 23px; margin-bottom: 2px; border: 1px solid #b9b9b9; padding: 2px 3px 0; font: 15px/17px "Liberation Mono", monospace; background: #f3f3f3; color: #777; border-radius: 0; }
.body .tight { margin: 2px 0 3px; }
.modes { display: flex; gap: 2px; padding-left: 84px; }
.modes button { width: 32px; height: 32px; border: 1px solid #777; display: grid; place-items: center; }
.modes svg { width: 26px; height: 26px; }
.modes .on { background: #8cc3d3; border-color: #2d7a94; }
.modes button:disabled { border-color: #bbb; }
.modes button:disabled svg { stroke: #8c8c8c; }
.two-btn { display: flex; gap: 2px; padding-right: 2px; }
.two-btn button { flex: 1; height: 29px; border: 1px solid #777; }
.actions { display: flex; justify-content: flex-end; gap: 5px; margin: 14px 6px 0 0; }
.actions button { width: 54px; height: 25px; border: 1px solid #bbb; }
.actions button:disabled { color: #909090; }
.actions .primary { border-color: #12617f; color: #12617f; }
```
